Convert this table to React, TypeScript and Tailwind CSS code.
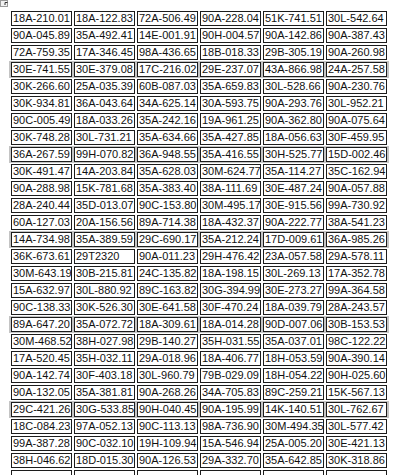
const ROWS: string[][] = [
  ["18A-210.01", "18A-122.83", "72A-506.49", "90A-228.04", "51K-741.51", "30L-542.64"],
  ["90A-045.89", "35A-492.41", "14E-001.91", "90H-004.57", "90A-142.86", "90A-387.43"],
  ["72A-759.35", "17A-346.45", "98A-436.65", "18B-018.33", "29B-305.19", "90A-260.98"],
  ["30E-741.55", "30E-379.08", "17C-216.02", "29E-237.07", "43A-866.98", "24A-257.58"],
  ["30K-266.60", "25A-035.39", "60B-087.03", "35A-659.83", "30L-528.66", "90A-230.76"],
  ["30K-934.81", "36A-043.64", "34A-625.14", "30A-593.75", "90A-293.76", "30L-952.21"],
  ["90C-005.49", "18A-033.26", "35A-242.16", "19A-961.25", "90A-362.80", "90A-075.64"],
  ["30K-748.28", "30L-731.21", "35A-634.66", "35A-427.85", "18A-056.63", "30F-459.95"],
  ["36A-267.59", "99H-070.82", "36A-948.55", "35A-416.55", "30H-525.77", "15D-002.46"],
  ["30K-491.47", "14A-203.84", "35A-628.03", "30M-624.77", "35A-114.27", "35C-162.94"],
  ["90A-288.98", "15K-781.68", "35A-383.40", "38A-111.69", "30E-487.24", "90A-057.88"],
  ["28A-240.44", "35D-013.07", "90C-153.80", "30M-495.17", "30E-915.56", "99A-730.92"],
  ["60A-127.03", "20A-156.56", "89A-714.38", "18A-432.37", "90A-222.77", "38A-541.23"],
  ["14A-734.98", "35A-389.59", "29C-690.17", "35A-212.24", "17D-009.61", "36A-985.26"],
  ["36K-673.61", "29T2320", "90A-011.23", "29H-476.42", "23A-057.58", "29A-578.11"],
  ["30M-643.19", "30B-215.81", "24C-135.82", "18A-198.15", "30L-269.13", "17A-352.78"],
  ["15A-632.97", "30L-880.92", "89C-163.82", "30G-394.99", "30E-273.27", "99A-364.58"],
  ["90C-138.33", "30K-526.30", "30E-641.58", "30F-470.24", "18A-039.79", "28A-243.57"],
  ["89A-647.20", "35A-072.72", "18A-309.61", "18A-014.28", "90D-007.06", "30B-153.53"],
  ["30M-468.52", "38H-027.98", "29B-140.27", "35H-031.55", "35A-037.01", "98C-122.22"],
  ["17A-520.45", "35H-032.11", "29A-018.96", "18A-406.77", "18H-053.59", "90A-390.14"],
  ["90A-142.74", "30F-403.18", "30L-960.79", "79B-029.09", "18H-054.22", "90H-025.60"],
  ["90A-132.05", "35A-381.81", "90A-268.26", "34A-705.83", "89C-259.21", "15K-567.13"],
  ["29C-421.26", "30G-533.85", "90H-040.45", "90A-195.99", "14K-140.51", "30L-762.67"],
  ["18C-084.23", "97A-052.13", "90C-113.13", "98A-736.90", "30M-494.35", "30L-577.42"],
  ["99A-387.28", "90C-032.10", "19H-109.94", "15A-546.94", "25A-005.20", "30E-421.13"],
  ["38H-046.62", "18D-015.30", "90A-126.53", "29A-332.70", "35A-642.85", "30K-318.86"],
  ["", "", "", "", "", ""],
];

function BrokenIcon() {
  return (
    <svg width="9" height="8" viewBox="0 0 9 8" className="absolute left-0 top-0">
      <rect x="0.5" y="0.5" width="7" height="6" fill="#f2f2f2" stroke="#9a9a9a" />
      <path d="M5 2.5 H7.5 M5 2.5 V5" stroke="#333" strokeWidth="1" fill="none" />
    </svg>
  );
}

export default function App() {
  return (
    <div className="relative h-[475px] w-[400px] overflow-hidden bg-white pl-[9px] pt-[10px] font-['Liberation_Sans',Arial,sans-serif] text-[11px] leading-[13px] text-[#111]">
      <BrokenIcon />
      <div className="flex w-max flex-col">
        {ROWS.map((row, r) => (
          <div
            key={r}
            className={`flex gap-[2px] px-[2px] py-[1px] ${r % 5 === 3 ? "bg-[#c4c4c4]" : "bg-white"}`}
          >
            {row.map((plate, c) => (
              <div
                key={c}
                className="h-[15px] w-[61px] overflow-hidden whitespace-nowrap border border-[#1c1c1c] bg-white px-px"
              >
                {plate}
              </div>
            ))}
          </div>
        ))}
      </div>
    </div>
  );
}
